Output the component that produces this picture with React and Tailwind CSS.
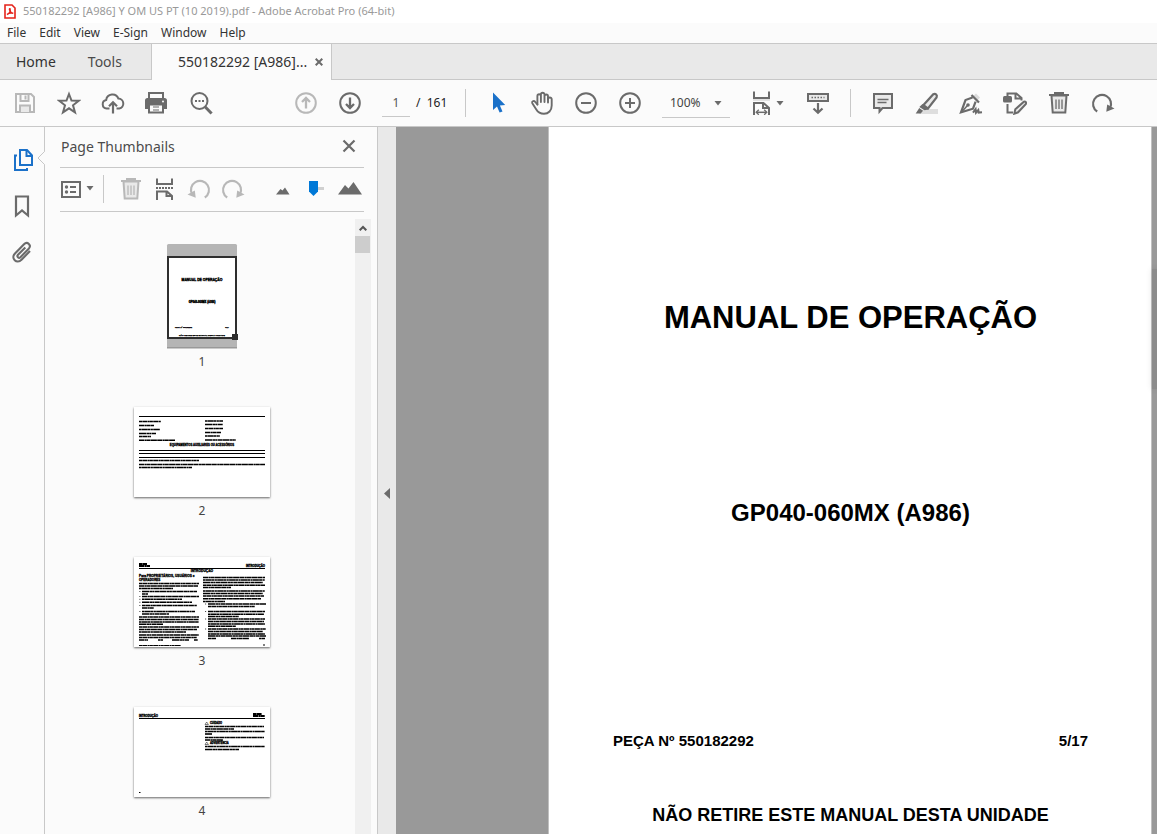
import React from "react";

const ICON = "h-6 w-6 shrink-0";

function Icon({ children, className = "" }) {
  return (
    <svg viewBox="0 0 24 24" fill="none" stroke="currentColor" strokeWidth="2" aria-hidden="true" className={`${ICON} ${className}`}>
      {children}
    </svg>
  );
}

function ToolButton({ label, children, className = "" }) {
  return (
    <button type="button" aria-label={label} className={`flex shrink-0 items-center ${className}`}>
      {children}
    </button>
  );
}

const Caret = ({ className = "" }) => (
  <svg viewBox="0 0 8 5" fill="currentColor" aria-hidden="true" className={`h-[5px] w-2 shrink-0 ${className}`}>
    <path d="M.5 0h7L4 4.5z" />
  </svg>
);

const TrashIcon = () => (
  <Icon>
    <path d="M2 4h20M8 3.500V2h8v1.500" />
    <path d="M4.500 4.500l1.200 17h12.600l1.200-17z" fill="#e9e9e9" />
    <path d="M9 8.500v9.500M12 8.500v9.500M15 8.500v9.500" strokeWidth="1.300" />
  </Icon>
);

const RedoIcon = () => (
  <Icon>
    <path d="M6.200 20.500A9 9 0 1 1 18.900 17.300" strokeWidth="2.200" />
    <path d="M23.500 17.600 15.300 20.800 16.200 13.500z" fill="currentColor" stroke="none" />
  </Icon>
);

const UndoIcon = () => (
  <Icon>
    <path d="M17.800 20.500A9 9 0 1 0 5.100 17.300" strokeWidth="2.200" />
    <path d="M.5 17.600 8.700 20.800 7.800 13.500z" fill="currentColor" stroke="none" />
  </Icon>
);

function Toolbar() {
  return (
    <div className="flex h-[47px] shrink-0 items-center gap-5 overflow-hidden border-b border-[#c8c8c8] bg-[#fbfbfb] pl-[13px] text-[#6b6b6b]">
      <ToolButton label="Save" className="text-[#b8b8b8]">
        <Icon>
          <path d="M3 3h15l3 3v15H3z" />
          <path d="M7.500 3v7h8V3" />
          <path d="M12.500 4.500v4" />
          <path d="M7 21v-6.500h10V21" fill="#e9e9e9" />
        </Icon>
      </ToolButton>
      <ToolButton label="Star">
        <Icon>
          <path d="M12 3l2.500 6.600 7.200.2-5.700 4.500 2 7L12 17.300l-6 4 2-7-5.700-4.500 7.200-.2z" />
        </Icon>
      </ToolButton>
      <ToolButton label="Upload to cloud">
        <Icon>
          <path d="M8.500 17.500H5.600a4.300 4.300 0 0 1-.4-8.500A6.300 6.300 0 0 1 17.400 7.600a5 5 0 0 1 .9 9.900h-2.800" />
          <path d="M12 22.500V11.500M8 15.300l4-4 4 4" strokeWidth="2.200" />
        </Icon>
      </ToolButton>
      <ToolButton label="Print">
        <Icon>
          <path d="M4 7V2h14v5" />
          <path d="M0 9.500a2.500 2.500 0 0 1 2.500-2.500h17A2.500 2.500 0 0 1 22 9.500V18H0z" fill="currentColor" stroke="none" />
          <path d="M4 13.500h14v8H4z" fill="#fbfbfb" />
          <path d="M8 16h6M8 19h6" strokeWidth="1.200" />
          <circle cx="18" cy="10.500" r="1" fill="#fbfbfb" stroke="none" />
        </Icon>
      </ToolButton>
      <ToolButton label="Find">
        <Icon>
          <circle cx="10.500" cy="10" r="8" />
          <path d="M16.300 16l6.300 6.500" strokeWidth="3" />
          <path d="M6 10h2M9.500 10h2M13 10h2" />
        </Icon>
      </ToolButton>
      <ToolButton label="Previous page" className="ml-[61px] text-[#b8b8b8]">
        <Icon>
          <circle cx="12" cy="12" r="9.800" />
          <path d="M12 17.500V7M8 11l4-4 4 4" strokeWidth="2.300" />
        </Icon>
      </ToolButton>
      <ToolButton label="Next page">
        <Icon>
          <circle cx="12" cy="12" r="9.800" />
          <path d="M12 6.500V17M8 13l4 4 4-4" strokeWidth="2.300" />
        </Icon>
      </ToolButton>
      <div className="flex h-7 items-center text-[12px] text-[#222]">
        <input aria-label="Page number" defaultValue="1" className="h-7 w-7 border-b border-[#c8c8c8] bg-transparent text-center text-[#555] outline-none" />
        <span className="w-[35px] pl-[6px] whitespace-pre">/  161</span>
      </div>
      <span className="h-7 w-px shrink-0 bg-[#c8c8c8]" />
      <ToolButton label="Select" className="text-[#1b71c9]">
        <Icon>
          <path d="M7 1.500V19l4-3.600 2.600 6.200 2.900-1.200-2.600-6 5.300-.4z" fill="currentColor" stroke="none" />
        </Icon>
      </ToolButton>
      <ToolButton label="Pan">
        <Icon>
          <g strokeWidth="1.900" strokeLinecap="round" strokeLinejoin="round">
            <path d="M18 11.500V5.300a1.700 1.700 0 0 0-3.500 0M14.500 11V3.500a1.800 1.800 0 0 0-3.600 0V11M10.900 5a1.700 1.700 0 0 0-3.500 0v8.500" />
            <path d="M18 8.300a1.800 1.800 0 0 1 3.700 0v6.200c0 5-3.200 8.300-7.700 8.300-3.700 0-6-1.300-7.700-4.300l-4-6.300c-.9-1.700 1.500-3 2.700-1.500l2.400 2.800" />
          </g>
        </Icon>
      </ToolButton>
      <ToolButton label="Zoom out">
        <Icon>
          <circle cx="12" cy="12" r="9.800" />
          <path d="M7 12h10" />
        </Icon>
      </ToolButton>
      <ToolButton label="Zoom in">
        <Icon>
          <circle cx="12" cy="12" r="9.800" />
          <path d="M7 12h10M12 7v10" />
        </Icon>
      </ToolButton>
      <div className="relative h-7 w-[68px] shrink-0">
        <select aria-label="Zoom level" className="h-7 w-full appearance-none border-b border-[#c8c8c8] bg-transparent pl-2 text-[12px] text-[#444] outline-none">
          <option>100%</option>
        </select>
        <Caret className="pointer-events-none absolute top-3 right-2" />
      </div>
      <ToolButton label="Fit width" className="w-9 gap-[2px]">
        <Icon>
          <path d="M4 .5v6.500h15V.5" />
          <path d="M3 9h17" stroke="#e2e2e2" />
          <path d="M4 24V12h9.500L19 17v7M13 12v5h6" />
          <path d="M6.500 21.300h10" strokeWidth="1.500" />
          <path d="M8.800 18.800l-2.600 2.500 2.600 2.500M14.200 18.800l2.600 2.500-2.600 2.500" strokeWidth="1.300" />
        </Icon>
        <Caret />
      </ToolButton>
      <ToolButton label="Scrolling">
        <Icon>
          <path d="M2 3h20v7H2z" fill="#e9e9e9" />
          <path d="M5.500 6.500h13" strokeDasharray="1.500 1.500" strokeWidth="1.600" />
          <path d="M12 12v9.500M7.500 17.500l4.500 4.300 4.500-4.300" strokeWidth="2.200" />
        </Icon>
      </ToolButton>
      <span className="h-7 w-px shrink-0 bg-[#c8c8c8]" />
      <ToolButton label="Comment">
        <Icon>
          <path d="M3 3h18v14h-9.500L8.500 20.500V17H3z" fill="#e9e9e9" />
          <path d="M6.500 8.500h11M6.500 11.500h9" strokeWidth="1.300" />
        </Icon>
      </ToolButton>
      <ToolButton label="Highlight">
        <Icon>
          <path d="M8 18h15v5H4z" fill="#dedede" stroke="none" />
          <path d="M8.500 14L18.300 3.200c2.300-1 4.300.9 3.300 3.200L13 17.500z" fill="#e9e9e9" strokeWidth="2.200" />
          <path d="M7.500 13l6 5.500-4 .8-5.200-3.300z" fill="currentColor" stroke="none" />
          <path d="M4.300 17L.7 22.500h5l2.300-2.700z" fill="currentColor" stroke="none" />
        </Icon>
      </ToolButton>
      <ToolButton label="Sign">
        <Icon>
          <path d="M13.500 5.500L17 2.500l4 4-3 3.500z" fill="#dcdcdc" stroke="none" />
          <path d="M12.500 4l7.500 7.500M13.500 6.500L6.500 9 2 21.300l12-3.600 2.600-7" strokeWidth="2.200" />
          <path d="M2.500 21l6-6.500" strokeWidth="1.500" />
          <circle cx="9" cy="14" r="1.800" fill="currentColor" stroke="none" />
          <path d="M14 21.700l2.600-3.600.4 3.600 2.300-2.700.4 2.600 3.300-.3" />
        </Icon>
      </ToolButton>
      <ToolButton label="Edit PDF">
        <Icon>
          <path d="M4.500 5V2.500h8.800L18.500 7v2.500M12.500 2.500v5h6M4.500 13v8.500H10" />
          <rect x="0" y="5" width="9" height="6.500" rx="1.500" fill="currentColor" stroke="none" />
          <path d="M11.300 22.700l1-4.400 8.600-7.600c1.500-.6 2.600.6 2 2.200l-7.800 8.400z" fill="#e9e9e9" />
        </Icon>
      </ToolButton>
      <ToolButton label="Delete">
        <TrashIcon />
      </ToolButton>
      <ToolButton label="Rotate">
        <RedoIcon />
      </ToolButton>
    </div>
  );
}

const BlackPage = ({ children, label }) => (
  <svg viewBox="0 0 136 90" role="img" aria-label={label} stroke="#000" fill="#000" className="h-[90px] w-[136px] bg-white shadow-[0_1px_2px_rgba(0,0,0,0.6)]">
    {children}
  </svg>
);

/* One greeked line of text: [x, y, width] */
const DASHES = ["3 .3 5 .4 2 .2", "5 .4 2 .2 4 .3 6 .3", "2 .3 6 .2 3 .4", "7 .4 3 .2 2 .4 4 .3"];
const Greek = ({ lines, size = 1.6 }) => (
  <g strokeWidth={size} fill="none">
    {lines.map(([x, y, w], i) => (
      <path key={i} d={`M${x} ${y}h${w}`} strokeDasharray={DASHES[i % 4]} />
    ))}
  </g>
);

const THUMB2 = [
  [5, 14.5, 22], [5, 18.5, 15], [5, 22.5, 21], [5, 26.5, 17], [5, 29.5, 12], [5, 33.3, 36],
  [71, 14, 18], [71, 17.5, 18], [71, 21.5, 18], [71, 25.5, 16], [71, 29, 15], [71, 33, 31],
  [5, 53.5, 60], [5, 57.5, 126], [5, 60.5, 53],
];

const THUMB3 = [
  [5, 26.5, 60], [5, 29, 59], [5, 31.5, 34],
  [8, 34.5, 55], [8, 37, 6], [8, 39.5, 57], [8, 42.3, 40], [8, 45.3, 50], [8, 48.5, 55], [8, 51, 12], [8, 54.5, 53], [8, 57, 27],
  [5, 60, 60], [5, 62.5, 60], [5, 65, 60], [5, 67.3, 24],
  [5, 70, 60], [5, 72.5, 58], [5, 75, 47], [5, 78, 60], [5, 80.5, 58],
  [5, 83, 9], [24, 83, 5], [38, 83, 17], [60, 83, 4],
  [69, 20.5, 62], [69, 23, 62], [69, 25.5, 60], [69, 28.3, 62], [69, 30.5, 28],
  [69, 34, 62], [69, 36.5, 60], [69, 39, 61], [69, 41.7, 58], [69, 44.5, 22],
  [74, 47, 58], [74, 49.5, 47], [74, 54.5, 57], [74, 57.2, 56], [74, 59.5, 31],
  [74, 62, 57], [74, 64.5, 56], [74, 67, 57], [74, 69.2, 28],
  [74, 72, 58], [74, 74.5, 55], [74, 77, 57], [74, 79, 58], [74, 81.5, 8], [97, 81.5, 18], [125, 81.5, 6],
];

const THUMB4 = [
  [71, 19.5, 59], [71, 22, 29], [71, 24.5, 60], [71, 27, 7], [71, 30.5, 59], [71, 33, 18], [71, 39.5, 60], [71, 42.5, 34],
];

function ThumbnailList() {
  return (
    <ol className="flex flex-1 flex-col items-center pl-[4px] pt-[25px] text-[12px] leading-4 text-[#444]">
      <li className="flex flex-col items-center gap-[5px]">
        <svg viewBox="0 0 72 105" role="img" aria-label="Page 1" className="h-[105px] w-[72px]">
          <rect x="1" y="0" width="70" height="104" rx="1.5" fill="#b5b5b5" />
          <rect x="1" y="103" width="70" height="1.5" fill="#999" />
          <rect x="2" y="13" width="68" height="81" fill="#fff" stroke="#2e2e2e" strokeWidth="2" />
          <rect x="66" y="90" width="6" height="6" fill="#2e2e2e" />
          <g fontFamily="Liberation Sans, sans-serif" fontWeight="700" textAnchor="middle" fill="#000" stroke="#000">
            <text x="36" y="36.8" fontSize="3.400" strokeWidth=".35">MANUAL DE OPERAÇÃO</text>
            <text x="36" y="59" fontSize="2.700" strokeWidth=".35">GP040-060MX (A986)</text>
            <text x="17.500" y="84.300" fontSize="1.800" strokeWidth=".25">PEÇA Nº 550182292</text>
            <text x="61" y="84.300" fontSize="1.800" strokeWidth=".25">5/17</text>
            <text x="36" y="92.300" fontSize="2.100" strokeWidth=".25">NÃO RETIRE ESTE MANUAL DESTA UNIDADE</text>
          </g>
        </svg>
        <span>1</span>
      </li>
      <li className="mt-[37px] flex flex-col items-center gap-[6px]">
        <BlackPage label="Page 2">
          <path d="M5 9.500h126M5 43.500h126M5 46.500h126M5 50.500h126" strokeWidth="1" />
          <Greek lines={THUMB2} size={1.4} />
          <text x="68" y="39" fontSize="2.800" fontWeight="700" strokeWidth=".3" textAnchor="middle" fontFamily="Liberation Sans, sans-serif">EQUIPAMENTOS AUXILIARES OU ACESSÓRIOS</text>
        </BlackPage>
        <span>2</span>
      </li>
      <li className="mt-[38px] flex flex-col items-center gap-[6px]">
        <BlackPage label="Page 3">
          <path d="M5 11.500h126" />
          <Greek lines={[[5, 7, 8], [5, 9, 11]]} size={2} />
          <Greek lines={THUMB3} />
          <path d="M5.500 34.500h.8M5.500 39.500h.8M5.500 42.300h.8M5.500 45.300h.8M5.500 48.500h.8M5.500 54.500h.8M71.300 47h.8M71.300 54.500h.8M71.300 62h.8M71.300 72h.8" />
          <Greek lines={[[5, 88.5, 42], [129, 88, 2]]} size={1} />
          <g strokeWidth=".3" fontWeight="700" fontFamily="Liberation Sans, sans-serif">
            <text x="131" y="10" fontSize="2.800" textAnchor="end">INTRODUÇÃO</text>
            <text x="68" y="15.200" fontSize="3.300" textAnchor="middle">INTRODUÇÃO</text>
            <text x="5" y="20.300" fontSize="3.200">Para PROPRIETÁRIOS, USUÁRIOS e</text>
            <text x="5" y="23.500" fontSize="3">OPERADORES</text>
          </g>
        </BlackPage>
        <span>3</span>
      </li>
      <li className="mt-[38px] flex flex-col items-center gap-[6px]">
        <BlackPage label="Page 4">
          <path d="M5 11.500h126" />
          <Greek lines={[[119, 7, 9], [119, 9, 12]]} size={2} />
          <Greek lines={THUMB4} />
          <path d="M71 17.500l1.700-2.500 1.700 2.500zM71 37.500l1.700-2.500 1.700 2.500z" fill="none" strokeWidth=".5" />
          <Greek lines={[[5, 85.5, 1.5]]} size={1} />
          <g strokeWidth=".3" fontWeight="700" fontFamily="Liberation Sans, sans-serif">
            <text x="5" y="10" fontSize="2.800">INTRODUÇÃO</text>
            <text x="76" y="17.300" fontSize="2.600">CUIDADO</text>
            <text x="76" y="37.300" fontSize="2.600">ADVERTÊNCIA</text>
          </g>
        </BlackPage>
        <span>4</span>
      </li>
    </ol>
  );
}

function ThumbnailPanel() {
  return (
    <section aria-label="Page Thumbnails" className="flex w-[333px] shrink-0 flex-col border-r border-[#c8c8c8] bg-[#fbfbfb]">
      <header className="ml-[15px] mr-[13px] flex h-[41px] shrink-0 items-center justify-between border-b border-[#c8c8c8] pr-2 pb-[2px] pl-px text-[#6b6b6b]">
        <h2 className="text-[14px] text-[#4b4b4b]">Page Thumbnails</h2>
        <button type="button" aria-label="Close panel">
          <svg viewBox="0 0 14 14" aria-hidden="true" fill="none" stroke="currentColor" strokeWidth="2.200" className="h-[14px] w-[14px]">
            <path d="M1.500 1.500l11 11M12.500 1.500l-11 11" />
          </svg>
        </button>
      </header>
      <div className="ml-[15px] mr-[13px] flex h-[44px] shrink-0 items-center border-b border-[#c8c8c8] pb-[2px] text-[#6b6b6b]">
        <ToolButton label="Options" className="w-[43px] gap-1">
          <svg viewBox="0 0 22 18" fill="none" stroke="currentColor" strokeWidth="2" aria-hidden="true" className="h-[18px] w-[22px]">
            <rect x="2" y="2" width="18" height="15" />
            <path d="M10 7h6M10 12h6" />
            <circle cx="6.500" cy="7" r="1.700" fill="currentColor" stroke="none" />
            <circle cx="6.500" cy="12" r="1.700" fill="currentColor" stroke="none" />
          </svg>
          <Caret />
        </ToolButton>
        <span className="h-7 w-px bg-[#c8c8c8]" />
        <div className="ml-[15px] flex items-center gap-[10px]">
          <ToolButton label="Delete pages" className="text-[#b8b8b8]"><TrashIcon /></ToolButton>
          <ToolButton label="Extract pages">
            <Icon>
              <path d="M4 1.500V7h15V1.500M4 23v-8.500h10l5 4.500v4M13.500 14.500V19H19" />
              <path d="M3 11h18" strokeDasharray="2 1" strokeWidth="1.800" />
            </Icon>
          </ToolButton>
          <ToolButton label="Rotate left" className="text-[#b8b8b8]"><UndoIcon /></ToolButton>
          <ToolButton label="Rotate right" className="text-[#b8b8b8]"><RedoIcon /></ToolButton>
        </div>
        <div className="ml-auto flex items-center pr-[2px]">
          <svg viewBox="0 0 14 8" fill="currentColor" aria-hidden="true" className="mt-1 h-2 w-[14px]">
            <path d="M0 7.500L4.500 2l2 1.500L9 .5l4.500 7z" />
          </svg>
          <input
            type="range"
            aria-label="Thumbnail size"
            min="0"
            max="10"
            defaultValue="0"
            className="mr-[14px] ml-[19px] h-4 w-[15px] appearance-none bg-[linear-gradient(#d0d0d0,#d0d0d0)] bg-[length:100%_3px] bg-center bg-no-repeat [&::-webkit-slider-thumb]:h-[15px] [&::-webkit-slider-thumb]:w-[9px] [&::-webkit-slider-thumb]:appearance-none [&::-webkit-slider-thumb]:bg-[#0078d7] [&::-webkit-slider-thumb]:[clip-path:polygon(0_0,100%_0,100%_70%,50%_100%,0_70%)]"
          />
          <svg viewBox="0 0 24 13" fill="currentColor" aria-hidden="true" className="h-[13px] w-6">
            <path d="M0 12.500L7 3l3.500 3.500L15.500 0 24 12.500z" />
          </svg>
        </div>
      </div>
      <div className="flex min-h-0 flex-1 overflow-hidden pt-[7px] pr-[6px]">
        <ThumbnailList />
        <div className="w-4 shrink-0 bg-[#f0f0f0]">
          <div className="flex h-[17px] items-center justify-center text-[#555]">
            <svg viewBox="0 0 8 6" fill="none" stroke="currentColor" strokeWidth="2" aria-hidden="true" className="h-[6px] w-2">
              <path d="M.7 5.300L4 2l3.300 3.300" />
            </svg>
          </div>
          <div className="h-[17px] w-[15px] bg-[#cdcdcd]" />
        </div>
      </div>
    </section>
  );
}

export default function App() {
  return (
    <div className="flex h-screen flex-col overflow-hidden bg-[#fbfbfb] font-['Noto_Sans',sans-serif] text-[#333]">
      <header className="flex h-[23px] shrink-0 items-center gap-[7px] bg-white text-[11px] text-[#999]">
        <svg viewBox="0 0 12 15" aria-hidden="true" className="ml-1 h-[15px] w-3">
          <path d="M1 1h7l3 3v10H1z" fill="#fff" stroke="#e5231b" strokeWidth="1.600" />
          <path d="M3 10.500c2.500-1.200 3.600-3.800 3-5.800-.8-.3-.8 1 .1 2.300.7 1.200 1.800 2.200 3.200 2.300M3 10.500c1.500-1.500 3.800-1.800 6.300-1.300" fill="none" stroke="#e5231b" strokeWidth="1.400" />
        </svg>
        <h1>550182292 [A986] Y OM US PT (10 2019).pdf - Adobe Acrobat Pro (64-bit)</h1>
      </header>
      <nav aria-label="Menu" className="flex h-5 shrink-0 items-center gap-[13px] pl-[7px] text-[12px]">
        <button type="button">File</button>
        <button type="button">Edit</button>
        <button type="button">View</button>
        <button type="button">E-Sign</button>
        <button type="button">Window</button>
        <button type="button">Help</button>
      </nav>
      <div role="tablist" className="flex h-[37px] shrink-0 border-t border-[#c8c8c8] bg-[#e9e9e9] text-[14px]">
        <div className="flex w-[151px] items-center gap-8 border-b border-[#c8c8c8] pl-4">
          <button type="button" role="tab">Home</button>
          <button type="button" role="tab" className="text-[#4b4b4b]">Tools</button>
        </div>
        <div className="flex w-[181px] items-center justify-between border-x border-[#c8c8c8] bg-[#fbfbfb] pr-2 pb-px pl-[26px]">
          <button type="button" role="tab" aria-selected="true">550182292 [A986]...</button>
          <button type="button" aria-label="Close tab" className="text-[#6b6b6b]">
            <svg viewBox="0 0 8 8" fill="none" stroke="currentColor" strokeWidth="2" aria-hidden="true" className="h-2 w-2">
              <path d="M.7.7l6.600 6.600M7.300.7L.7 7.300" />
            </svg>
          </button>
        </div>
        <div className="flex-1 border-b border-[#c8c8c8]" />
      </div>
      <Toolbar />
      <main className="flex min-h-0 flex-1">
        <nav aria-label="Panels" className="relative flex w-[45px] shrink-0 flex-col items-center gap-[22px] border-r border-[#c8c8c8] pt-[21px] text-[#6b6b6b]">
          <ToolButton label="Page Thumbnails" className="text-[#1b71c9]">
            <Icon>
              <path d="M10 2h7l5 5.500V17H10z" fill="#fbfbfb" />
              <path d="M16.500 2v6H22M7 7.500H5V22h12v-2" />
            </Icon>
          </ToolButton>
          <ToolButton label="Bookmarks">
            <Icon><path d="M6 2.500h12v19l-6-5-6 5z" strokeWidth="2.200" /></Icon>
          </ToolButton>
          <ToolButton label="Attachments">
            <Icon>
              <path d="M15.300 7.500L8 14.800c-1.600 1.800.7 4 2.400 2.400l8.300-8.500c3.200-3.500-1.300-7.800-4.700-4.500l-9 9.200c-4.700 5 1.800 11 6.500 6.300l8.500-8.700" strokeWidth="2.100" />
            </Icon>
          </ToolButton>
          <svg viewBox="0 0 8 14" fill="none" aria-hidden="true" className="absolute top-6 -right-px h-[14px] w-2">
            <path d="M8 0v14L1 7z" fill="#fbfbfb" />
            <path d="M7.500 0v.5L1 7l6.500 6.500v.5" stroke="#c8c8c8" />
          </svg>
        </nav>
        <ThumbnailPanel />
        <button type="button" aria-label="Collapse panel" className="flex w-[18px] shrink-0 items-center justify-center bg-[#e9e9e9] pb-[1px] pt-[27px] text-[#6b6b6b]">
          <svg viewBox="0 0 6 11" fill="currentColor" aria-hidden="true" className="h-[11px] w-[6px]">
            <path d="M6 0v11L0 5.500z" />
          </svg>
        </button>
        <div className="relative flex flex-1 justify-end overflow-hidden bg-[#999] pr-[5px]">
          <article className="flex w-[604px] shrink-0 flex-col border-x border-[#c0c0c0] bg-white pt-[173px] pr-[63px] pl-16 font-['Liberation_Sans',sans-serif] font-bold text-black">
            <h2 className="text-center text-[31px] leading-9 whitespace-nowrap">MANUAL DE OPERAÇÃO</h2>
            <p className="mt-[163px] text-center text-[24px] leading-7">GP040-060MX (A986)</p>
            <p className="mt-[204px] flex justify-between text-[15px] leading-5">
              <span>PEÇA Nº 550182292</span>
              <span>5/17</span>
            </p>
            <p className="mt-[54px] text-center text-[18px] leading-5 whitespace-nowrap">NÃO RETIRE ESTE MANUAL DESTA UNIDADE</p>
          </article>
          <div className="absolute top-[142px] right-0 h-[120px] w-[5px] bg-[#8c8c8c] shadow-[0_0_6px_rgba(0,0,0,0.12)]" />
        </div>
      </main>
    </div>
  );
}
